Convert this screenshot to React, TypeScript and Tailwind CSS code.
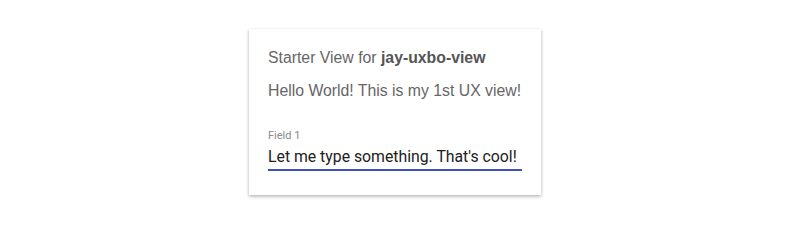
import { useState } from 'react';

export default function App() {
  const [value, setValue] = useState("Let me type something. That's cool!");

  return (
    <div className="min-h-screen bg-white pt-[29px]">
      <div className="mx-auto w-[292px] bg-white px-[19px] pt-[19px] pb-[24px] shadow-[0_1px_3px_rgba(0,0,0,0.2),0_2px_4px_rgba(0,0,0,0.14)]">
        <div className="whitespace-nowrap font-['Liberation_Sans',Arial,sans-serif] text-[15.8px] leading-[20px] text-[#666]">
          Starter View for <b className="font-bold text-[#555]">jay-uxbo-view</b>
        </div>
        <div className="mt-[13px] whitespace-nowrap font-['Liberation_Sans',Arial,sans-serif] text-[15.8px] leading-[20px] text-[#666]">
          Hello World! This is my 1st UX view!
        </div>

        {/* Field */}
        <label className="mt-[28px] block font-['Roboto',sans-serif]">
          <span className="mb-[4px] block text-[11px] leading-[14px] text-[#8a8a8a]">Field 1</span>
          <input
            value={value}
            onChange={e => setValue(e.target.value)}
            className="block w-full border-b-2 border-[#3f51b5] bg-transparent pb-[2px] text-[15.8px] leading-[20px] text-[#212121] outline-none"
          />
        </label>
      </div>
    </div>
  );
}
